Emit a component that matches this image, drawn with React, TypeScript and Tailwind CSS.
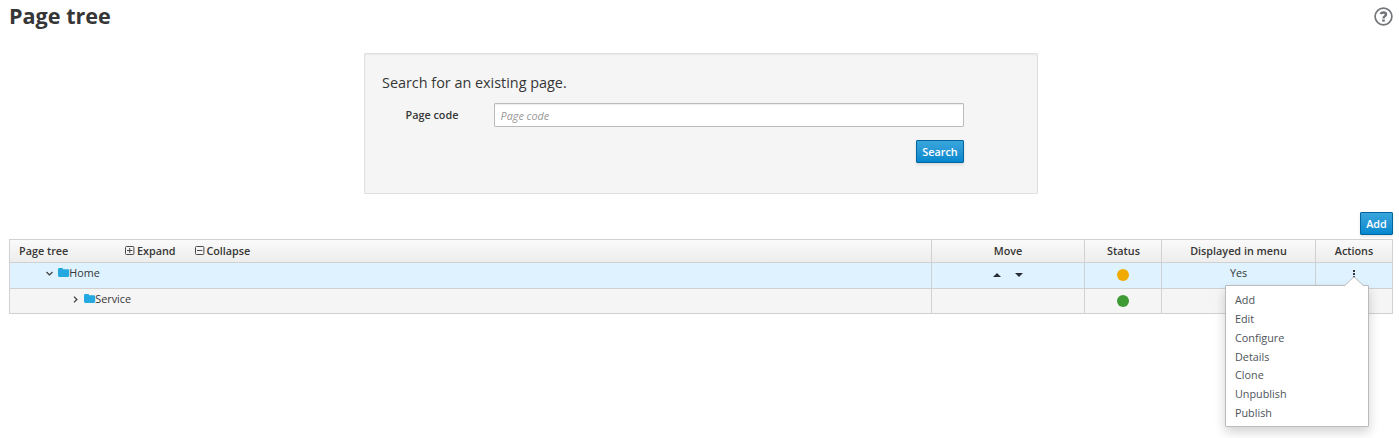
import type { ReactNode } from 'react';

const columns = 'grid grid-cols-[922px_153px_77px_154px_76px]';

function PrimaryButton({ children, className }: { children: ReactNode; className: string }) {
  return (
    <button
      className={`${className} h-[23px] rounded-[1px] border border-[#00659c] bg-linear-to-b from-[#39a5dc] to-[#0088ce] text-center text-[10.8px] leading-[21px] font-semibold text-white shadow-[0_2px_3px_rgba(3,3,3,0.1)]`}
    >
      {children}
    </button>
  );
}

function BoxIcon({ plus }: { plus?: boolean }) {
  return (
    <svg width="9" height="9" viewBox="0 0 9 9" fill="none" stroke="#4a4a4a" strokeWidth="1" className="-mt-px overflow-visible">
      <rect x="0.5" y="0.5" width="8.4" height="8" rx="1" />
      <path d="M2 4.5H7.4" />
      {plus && <path d="M4.7 2V7" />}
    </svg>
  );
}

function FolderIcon() {
  return (
    <svg width="12" height="9" viewBox="0 0 12 9" fill="#23a8e0">
      <path d="M0 1.4Q0 0 1.4 0H3.8Q5.2 0 5.2 1.2H9.8Q11.2 1.2 11.2 2.6V7.6Q11.2 9 9.8 9H1.4Q0 9 0 7.6Z" />
    </svg>
  );
}

function Cell({ children, className = '' }: { children?: ReactNode; className?: string }) {
  return <div className={`border-r border-[#d1d1d1] last:border-r-0 ${className}`}>{children}</div>;
}

const actions = ['Add', 'Edit', 'Configure', 'Details', 'Clone', 'Unpublish', 'Publish'];

export default function App() {
  return (
    <div className="relative h-[438px] w-[1399px] overflow-hidden bg-white font-['Open_Sans',sans-serif] text-[10.8px] text-[#363636]">
      <header className="flex h-[53px] items-start justify-between pr-[6px] pl-[9px]">
        <h1 className="pt-[1px] text-[21.6px] leading-[30px] font-bold">Page tree</h1>
        <svg className="mt-[7px]" width="19" height="19" viewBox="0 0 19 19" fill="none" stroke="#72767b">
          <circle cx="9.5" cy="9.5" r="8.4" strokeWidth="1.7" />
          <path d="M6.6 7.1C7.6 4.9 12 4.9 12 7.4C12 9.2 9.5 9.1 9.5 11.4" strokeWidth="2.4" />
          <path d="M8.2 13.6H10.8" strokeWidth="2.2" />
        </svg>
      </header>

      <section className="ml-[364px] h-[141px] w-[674px] rounded-[1px] border border-[#e0e0e0] bg-[#f5f5f5] pt-[18px] pl-[17px] shadow-[inset_0_1px_2px_rgba(0,0,0,0.05)]">
        <h2 className="text-[14.4px] leading-[22px]">Search for an existing page.</h2>
        <div className="mt-[9px] flex w-[582px] items-start">
          <label className="w-[112px] pr-[35.6px] text-right leading-[24px] font-semibold">Page code</label>
          <input
            className="h-[24px] w-[470px] rounded-[1px] border border-[#bbb] bg-white pr-[6px] pb-px pl-[5.6px] pt-[1px] text-[10.8px] shadow-[inset_0_1px_1px_rgba(3,3,3,0.075)] outline-none placeholder:text-[#999] placeholder:italic"
            placeholder="Page code"
          />
        </div>
        <div className="mt-[13px] flex w-[582px] justify-end">
          <PrimaryButton className="w-[48px]">Search</PrimaryButton>
        </div>
      </section>

      <div className="mt-[18px] flex justify-end pr-[6px]">
        <PrimaryButton className="w-[33px]">Add</PrimaryButton>
      </div>

      <main className="mt-[4px] ml-[9px] w-[1384px] border border-[#d1d1d1]">
        <div className={`${columns} h-[23px] border-b border-[#d1d1d1] bg-linear-to-b from-[#fafafa] to-[#ededed] text-center leading-[22px] font-semibold`}>
          <Cell className="flex items-center pl-[9px]">
            <span className="w-[106px] text-left">Page tree</span>
            <span className="flex w-[70px] items-center gap-[3px]"><BoxIcon plus />Expand</span>
            <span className="flex items-center gap-[2.4px]"><BoxIcon />Collapse</span>
          </Cell>
          <Cell>Move</Cell>
          <Cell className="pl-px">Status</Cell>
          <Cell>Displayed in menu</Cell>
          <Cell>Actions</Cell>
        </div>
        <div className={`${columns} h-[26px] border-b border-[#d1d1d1] bg-[#def3ff] text-center leading-[20px]`}>
          <Cell className="flex h-[25px] items-start pl-[36px]">
            <svg className="mt-[8px] mr-[5px]" width="7" height="5" viewBox="0 0 7 5" fill="none" stroke="#363636" strokeWidth="1.1"><path d="M0.5 1L3.5 4L6.5 1" /></svg>
            <span className="mt-[5px] -mr-[0.7px]"><FolderIcon /></span>
            <span>Home</span>
          </Cell>
          <Cell className="flex justify-center gap-[14px] pt-[10px]">
            <svg width="8" height="4" viewBox="0 0 8 4" fill="#292e34"><path d="M0 4L4 0L8 4Z" /></svg>
            <svg width="8" height="4" viewBox="0 0 8 4" fill="#292e34"><path d="M0 0H8L4 4Z" /></svg>
          </Cell>
          <Cell className="flex justify-center pt-[6px]"><span className="size-[12px] rounded-full bg-[#f0ab00]" /></Cell>
          <Cell>Yes</Cell>
          <Cell className="flex justify-center pt-[7px]">
            <svg width="2" height="8" viewBox="0 0 2 8" fill="#363636"><path d="M0 0H2V2H0ZM0 3H2V5H0ZM0 6H2V8H0Z" /></svg>
          </Cell>
        </div>
        <div className={`${columns} h-[24px] bg-[#f5f5f5] leading-[20px]`}>
          <Cell className="flex items-start pl-[63px]">
            <svg className="mt-[7px] mr-[6px]" width="5" height="7" viewBox="0 0 5 7" fill="none" stroke="#363636" strokeWidth="1.2"><path d="M1 0.6L3.9 3.5L1 6.4" /></svg>
            <span className="mt-[5px] -mr-[0.7px]"><FolderIcon /></span>
            <span>Service</span>
          </Cell>
          <Cell />
          <Cell className="flex justify-center pt-[6px]"><span className="size-[12px] rounded-full bg-[#3f9c35]" /></Cell>
          <Cell />
          <Cell />
        </div>
      </main>

      <ul className="absolute top-[285px] left-[1225px] h-[142px] w-[144px] rounded-[1px] border border-[#bbb] bg-white pt-[5.1px] pl-[9px] leading-[18.85px] text-[#4d5258] shadow-[0_5px_11px_rgba(3,3,3,0.18)]">
        <svg className="absolute -top-[10px] left-[118px]" width="20" height="11" viewBox="0 0 20 11">
          <path d="M0.5 10L10 0.8L19.5 10V11H0.5Z" fill="white" />
          <path d="M0.5 9.7L10 0.8L19.5 9.7" fill="none" stroke="#bbb" />
        </svg>
        {actions.map((action) => <li key={action}>{action}</li>)}
      </ul>
    </div>
  );
}
